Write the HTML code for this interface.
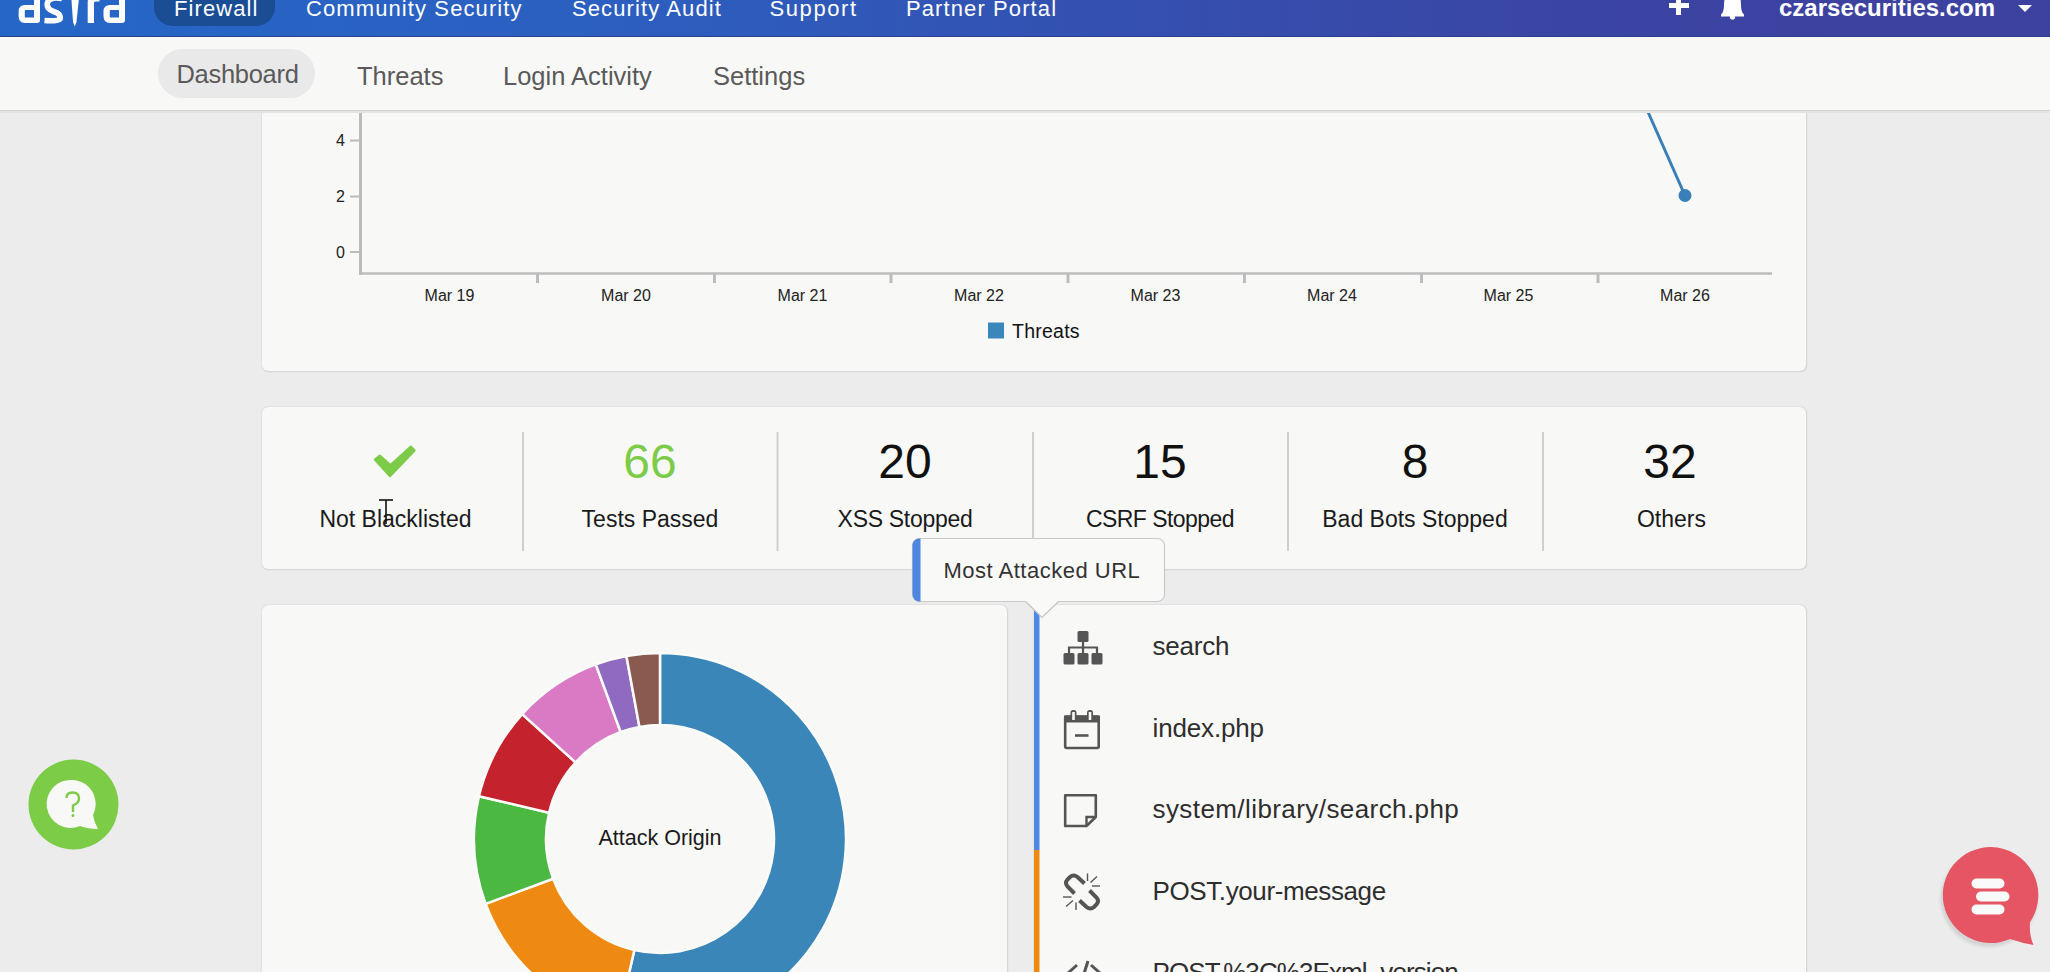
<!DOCTYPE html>
<html><head><meta charset="utf-8">
<style>
*{box-sizing:border-box}
html,body{margin:0;padding:0}
body{width:2050px;height:972px;overflow:hidden;background:#ececec;position:relative;font-family:"Liberation Sans",sans-serif}
.abs{position:absolute}
#nav{left:0;top:0;width:2050px;height:37px;background:linear-gradient(90deg,#2567c7 0%,#2c5fc0 30%,#3450b0 55%,#3a46a4 75%,#3d41a0 90%,#3d41a0 100%);border-bottom:1px solid #2c3f8f;z-index:5;overflow:hidden}
.nt{position:absolute;color:#fff;font-size:22px;letter-spacing:1.1px;top:-6.5px;white-space:nowrap;line-height:30px}
#sub{left:0;top:37px;width:2050px;height:74px;background:#f8f8f6;border-bottom:1px solid #d4d4d4;box-shadow:0 2px 0 #e4e4e4;z-index:4}
.st{position:absolute;color:#5a5a5a;font-size:25.5px;letter-spacing:0;white-space:nowrap;line-height:30px}
.card{position:absolute;background:#f8f8f6;border-radius:6px;box-shadow:0 0 1.5px rgba(0,0,0,.22),1px 1px 2px rgba(0,0,0,.07)}
.lbl{position:absolute;font-size:23px;color:#1a1a1a;white-space:nowrap;line-height:28px;text-align:center;width:256px}
.num{position:absolute;font-size:48px;color:#111;white-space:nowrap;line-height:56px;text-align:center;width:256px}
.div{position:absolute;width:2px;background:#cfcfcf;top:25px;height:119px}
.url{position:absolute;left:118px;font-size:26px;letter-spacing:0.3px;color:#2e2e2e;white-space:nowrap;line-height:30px}
</style></head><body>

<div id="nav" class="abs">
  <svg class="abs" style="left:0;top:0" width="140" height="36">
   <g fill="#fff" fill-rule="evenodd">
    <path d="M34 -10 H40 V20 Q40 23 37 23 H25 Q18.6 23 18.6 16 V11.5 Q18.6 5 25 5 H34 Z M25.5 10 H34 V17.5 H25.5 Q24.8 17.5 24.8 16.5 V11 Q24.8 10 25.5 10 Z"/>
    <path d="M119 -10 H125 V20 Q125 23 122 23 H110 Q103.5 23 103.5 16 V11.5 Q103.5 5 110 5 H119 Z M110.5 10 H119 V17.5 H110.5 Q109.8 17.5 109.8 16.5 V11 Q109.8 10 110.5 10 Z"/>
    <path d="M70.8 -10 H79.8 L76.5 22 L74.7 26.5 L73 22 Z"/>
    <path d="M87.7 23 V2 Q87.7 -4 94 -4 H99.5 V1.5 H95.5 Q94 1.5 94 3 V23 Z"/>
   </g>
   <path d="M62 -1.5 Q50 -3.5 47.5 2.5 Q46 9 53.5 11.5 Q61.5 14 60 19 Q58 21.5 44.5 20.5" fill="none" stroke="#fff" stroke-width="5.6"/>
  </svg>
  <div class="abs" style="left:154px;top:-20px;width:121px;height:45.5px;border-radius:19px;background:#1b4d94"></div>
  <div class="nt" style="left:174px">Firewall</div>
  <div class="nt" style="left:306px">Community Security</div>
  <div class="nt" style="left:572px">Security Audit</div>
  <div class="nt" style="left:769.5px;letter-spacing:1.6px">Support</div>
  <div class="nt" style="left:906px">Partner Portal</div>
  <div class="nt" style="left:1779px;top:-7px;font-weight:bold;letter-spacing:0;font-size:24px">czarsecurities.com</div>
  <svg class="abs" style="left:1660px;top:0" width="390" height="36">
   <path d="M18.5 -4 V15 M9 5.5 H29" stroke="#fff" stroke-width="5" fill="none"/>
   <path d="M72.5 -8 Q81 -8 81 5 Q81 12 84 14.5 L84 16.5 H61 V14.5 Q64 12 64 5 Q64 -8 72.5 -8 Z" fill="#fff"/>
   <circle cx="72.5" cy="17" r="2.6" fill="#fff"/>
   <path d="M358 5 H372 L365 12 Z" fill="#fff"/>
  </svg>
</div>

<div id="sub" class="abs">
  <div class="abs" style="left:158px;top:12px;width:157px;height:49px;border-radius:25px;background:#e9e9e9"></div>
  <div class="st" style="left:176.5px;top:21.5px;letter-spacing:-0.3px">Dashboard</div>
  <div class="st" style="left:357px;top:24px">Threats</div>
  <div class="st" style="left:503px;top:24px">Login Activity</div>
  <div class="st" style="left:713px;top:24px">Settings</div>
</div>

<!-- card1 chart -->
<div class="card" style="left:262px;top:40px;width:1544px;height:331px"></div>

<!-- card2 stats -->
<div class="card" style="left:262px;top:407px;width:1544px;height:162px"></div>

<!-- card3 donut -->
<div class="card" style="left:262px;top:605px;width:745px;height:420px"></div>

<!-- card4 urls -->
<div class="card" style="left:1034px;top:605px;width:772px;height:420px;border-radius:0 6px 6px 0"></div>


<svg class="abs" style="left:0;top:0;z-index:3" width="2050" height="972" viewBox="0 0 2050 972" font-family="Liberation Sans, sans-serif">
<!-- chart -->
<g stroke="#bcbcbc" fill="none">
<line x1="360.5" y1="90" x2="360.5" y2="275" stroke-width="3"/>
<line x1="359" y1="273.5" x2="1772" y2="273.5" stroke-width="2.5"/>
<line x1="350" y1="140.5" x2="359" y2="140.5" stroke-width="2"/>
<line x1="350" y1="196.5" x2="359" y2="196.5" stroke-width="2"/>
<line x1="350" y1="252" x2="359" y2="252" stroke-width="2"/>
<g stroke-width="3">
<line x1="537.5" y1="274" x2="537.5" y2="283"/><line x1="714.5" y1="274" x2="714.5" y2="283"/><line x1="891" y1="274" x2="891" y2="283"/><line x1="1068" y1="274" x2="1068" y2="283"/><line x1="1244.5" y1="274" x2="1244.5" y2="283"/><line x1="1421.5" y1="274" x2="1421.5" y2="283"/><line x1="1598" y1="274" x2="1598" y2="283"/>
</g></g>
<g font-size="16" fill="#222" text-anchor="end">
<text x="345" y="146">4</text><text x="345" y="202">2</text><text x="345" y="257.5">0</text>
</g>
<g font-size="16" fill="#222" text-anchor="middle">
<text x="449.5" y="300.5">Mar 19</text><text x="626" y="300.5">Mar 20</text><text x="802.5" y="300.5">Mar 21</text><text x="979" y="300.5">Mar 22</text><text x="1155.5" y="300.5">Mar 23</text><text x="1332" y="300.5">Mar 24</text><text x="1508.5" y="300.5">Mar 25</text><text x="1685" y="300.5">Mar 26</text>
</g>
<line x1="1625" y1="60" x2="1685" y2="195.5" stroke="#3a7fb8" stroke-width="3"/>
<circle cx="1685" cy="195.5" r="6.5" fill="#3a7fb8"/>
<rect x="988" y="322.5" width="16" height="16" fill="#3b86bb"/>
<text x="1012" y="338" font-size="19.5" letter-spacing="0.25" fill="#111">Threats</text>

<!-- stats -->
<g fill="#cfcfcf">
<rect x="522" y="432" width="2" height="119"/><rect x="776.5" y="432" width="2" height="119"/><rect x="1032" y="432" width="2" height="119"/><rect x="1287" y="432" width="2" height="119"/><rect x="1542" y="432" width="2" height="119"/>
</g>
<path d="M374.8 459.6 L379.8 455.6 L390.5 465 L410.8 446.6 L414.6 450.6 L390 476.2 Z" fill="#7ccb49" stroke="#7ccb49" stroke-width="2.2" stroke-linejoin="round"/>
<g font-size="48" text-anchor="middle" fill="#111">
<text x="650" y="477.5" fill="#7ccc4a">66</text><text x="905" y="477.5">20</text><text x="1160" y="477.5">15</text><text x="1415" y="477.5">8</text><text x="1670" y="477.5">32</text>
</g>
<g font-size="23" text-anchor="middle" fill="#1a1a1a">
<text x="395.5" y="526.5">Not Blacklisted</text><text x="650" y="526.5">Tests Passed</text><text x="905" y="526.5" letter-spacing="-0.3">XSS Stopped</text><text x="1160" y="526.5" letter-spacing="-0.55">CSRF Stopped</text><text x="1415" y="526.5">Bad Bots Stopped</text><text x="1671.5" y="526.5">Others</text>
</g>
<!-- cursor -->
<g stroke="#111" stroke-width="1.6" fill="none">
<line x1="379" y1="500" x2="393" y2="500"/><line x1="386" y1="500" x2="386" y2="524"/>
</g>

<!-- donut -->
<path d="M660.00 653.00A186 186 0 1 1 618.16 1020.23L634.36 950.08A114 114 0 1 0 660.00 725.00Z" fill="#3b86b9" stroke="#fbfbfa" stroke-width="2.5"/>
<path d="M618.16 1020.23A186 186 0 0 1 485.67 903.83L553.15 878.74A114 114 0 0 0 634.36 950.08Z" fill="#ee8a12" stroke="#fbfbfa" stroke-width="2.5"/>
<path d="M485.67 903.83A186 186 0 0 1 478.99 796.21L549.06 812.77A114 114 0 0 0 553.15 878.74Z" fill="#4bb842" stroke="#fbfbfa" stroke-width="2.5"/>
<path d="M478.99 796.21A186 186 0 0 1 522.21 714.06L575.55 762.42A114 114 0 0 0 549.06 812.77Z" fill="#c4222c" stroke="#fbfbfa" stroke-width="2.5"/>
<path d="M522.21 714.06A186 186 0 0 1 595.77 664.44L620.64 732.01A114 114 0 0 0 575.55 762.42Z" fill="#da79c4" stroke="#fbfbfa" stroke-width="2.5"/>
<path d="M595.77 664.44A186 186 0 0 1 626.42 656.06L639.42 726.87A114 114 0 0 0 620.64 732.01Z" fill="#8f6ac0" stroke="#fbfbfa" stroke-width="2.5"/>
<path d="M626.42 656.06A186 186 0 0 1 660.00 653.00L660.00 725.00A114 114 0 0 0 639.42 726.87Z" fill="#8a5a51" stroke="#fbfbfa" stroke-width="2.5"/>
<text x="660" y="845" font-size="21.5" text-anchor="middle" fill="#1a1a1a">Attack Origin</text>

<!-- url list stripe -->
<rect x="1034" y="604" width="5.5" height="246" fill="#4f89e4"/>
<rect x="1034" y="850" width="5.5" height="130" fill="#ee8a12"/>
<g font-size="26" fill="#2e2e2e">
<text x="1152.5" y="655" letter-spacing="-0.2">search</text>
<text x="1152.5" y="737" letter-spacing="-0.15">index.php</text>
<text x="1152.5" y="817.5" letter-spacing="0.42">system/library/search.php</text>
<text x="1152.5" y="900" letter-spacing="-0.39">POST.your-message</text>
<text x="1152.5" y="981" letter-spacing="-0.9">POST.%3C%3Exml_version</text>
</g>
<!-- icons -->
<g fill="#555">
<rect x="1077.5" y="631" width="11" height="11" rx="1.5"/>
<rect x="1063.5" y="653" width="11" height="11.5" rx="1.5"/><rect x="1077.5" y="653" width="11" height="11.5" rx="1.5"/><rect x="1091.5" y="653" width="11" height="11.5" rx="1.5"/>
</g>
<g stroke="#555" stroke-width="2.2" fill="none">
<line x1="1083" y1="641" x2="1083" y2="654"/><path d="M1069 654 V647.5 H1097 V654"/>
</g>
<!-- calendar -->
<g fill="none" stroke="#555" stroke-width="2.6">
<rect x="1065.2" y="716.5" width="33.5" height="31.5" rx="1.5"/>
<line x1="1075" y1="735.5" x2="1088.5" y2="735.5"/>
</g>
<rect x="1064" y="715.5" width="36" height="7" fill="#555"/>
<rect x="1070.5" y="710" width="6" height="11" rx="2.5" fill="#555"/><rect x="1087" y="710" width="6" height="11" rx="2.5" fill="#555"/>
<rect x="1072.2" y="712" width="2.6" height="8" fill="#f8f8f6"/><rect x="1088.7" y="712" width="2.6" height="8" fill="#f8f8f6"/>
<!-- sticky note -->
<path d="M1065.2 795.3 H1095.8 V817 L1086.5 826 H1065.2 Z" fill="none" stroke="#555" stroke-width="2.6" stroke-linejoin="round"/>
<path d="M1086.5 826 V817 H1095.8" fill="none" stroke="#555" stroke-width="2.4"/>
<!-- unlink -->
<g fill="none" stroke="#555" stroke-width="4" stroke-linecap="butt">
<path d="M1084.5 883.5 L1077.5 877 Q1073.5 874 1070 877 L1067.5 879.5 Q1064.5 883 1067.5 886.5 L1074.5 893.5"/>
<path d="M1089.5 890.5 L1096.5 897.5 Q1099.5 901 1096.5 904.5 L1094 907 Q1090.5 910 1086.5 907 L1079.5 900.5"/>
</g>
<g stroke="#555" stroke-width="1.4">
<line x1="1087.5" y1="873.5" x2="1087.5" y2="881"/><line x1="1090.5" y1="882.5" x2="1097" y2="876.5"/><line x1="1092" y1="886" x2="1100" y2="886"/>
<line x1="1063" y1="897" x2="1071.5" y2="897"/><line x1="1066" y1="906.5" x2="1073" y2="900.5"/><line x1="1076" y1="902.5" x2="1076" y2="910"/>
</g>
<!-- code icon -->
<g fill="none" stroke="#555" stroke-width="3">
<path d="M1077 965 L1068 973"/><path d="M1091 965 L1100 973"/><path d="M1088 961 L1082 980"/>
</g>

<!-- tooltip -->
<defs><clipPath id="tc"><rect x="912.5" y="538.5" width="252" height="63" rx="7"/></clipPath></defs>
<rect x="912.5" y="538.5" width="252" height="63" rx="7" fill="#f9f9f8" stroke="#c9c9c9" stroke-width="1.2"/>
<rect x="912" y="538" width="8.5" height="64" fill="#4f86e0" clip-path="url(#tc)"/>
<polygon points="1025.5,601 1042,617.5 1058.5,601" fill="#f9f9f8"/>
<polyline points="1025.5,601.5 1042,617.5 1058.5,601.5" fill="none" stroke="#c4c4c4" stroke-width="1.2"/>
<text x="943.5" y="578" font-size="22" letter-spacing="0.5" fill="#333">Most Attacked URL</text>

<!-- help button -->
<circle cx="73.5" cy="804.5" r="45" fill="#7ccc48"/>
<path d="M72.5 780 A24 24 0 1 0 80 826 Q88 829 98 829 Q94 822 93 815 A24 24 0 0 0 72.5 780 Z" fill="#f8f8f6"/>
<path d="M66.5 798 Q66.5 792.5 72.5 792.5 Q79 792.5 79 798.5 Q79 803 73 805.5 V812" fill="none" stroke="#7ccc48" stroke-width="2.4"/>
<circle cx="73" cy="815.5" r="1.5" fill="#7ccc48"/>

<!-- chat button -->
<circle cx="1989" cy="898.5" r="48.5" fill="rgba(0,0,0,0.10)" filter="url(#sh)"/>
<defs><filter id="sh" x="-20%" y="-20%" width="140%" height="140%"><feGaussianBlur stdDeviation="1.5"/></filter></defs>
<path d="M1991 847 A48 48 0 1 0 2010 939 Q2022 943 2033.5 945 Q2029 935 2030 922 A48 48 0 0 0 1991 847 Z" fill="#e55563"/>
<g fill="#fafafa">
<rect x="1971.5" y="878.5" width="33" height="10" rx="5"/><rect x="1976" y="891.5" width="33.5" height="10" rx="5"/><rect x="1971.5" y="904.5" width="33" height="10" rx="5"/>
</g>
</svg>
</body></html>
